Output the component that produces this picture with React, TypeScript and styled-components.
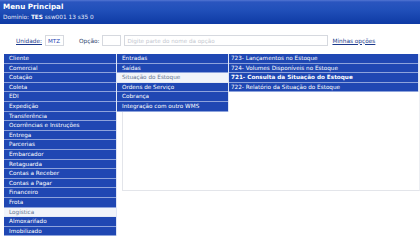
import React from "react";
import styled, { createGlobalStyle } from "styled-components";

const GlobalStyle = createGlobalStyle`
  html, body {
    margin: 0;
    background: #ffffff;
    font-family: "DejaVu Sans", Verdana, sans-serif;
  }
`;

const CELL_BLUE = "#1f47b3";
const CELL_LINE = "#8da3dc";
const ROW_H = 9.6;

const Header = styled.div`
  height: 24px;
  box-sizing: border-box;
  padding: 2px 3px 0;
  background: linear-gradient(180deg, #5375d2 0px, #2a55bf 2px, #2150ba 40%, #0e3aa4 100%);
  color: #ffffff;
`;

const Title = styled.div`
  font-size: 7.2px;
  font-weight: bold;
  line-height: 10px;
`;

const Domain = styled.div`
  font-size: 5.8px;
  line-height: 9px;
  margin-top: 1px;
  color: #e3e9f8;

  b {
    color: #ffffff;
  }
`;

const FilterBar = styled.div`
  display: flex;
  align-items: center;
  height: 11px;
  margin-top: 11px;
  padding-left: 16px;
  font-size: 5.8px;
`;

const LinkLabel = styled.span<{ $left?: number; $right?: number }>`
  color: #1c3a8c;
  text-decoration: underline;
  margin-left: ${(p) => p.$left ?? 0}px;
  margin-right: ${(p) => p.$right ?? 0}px;
  white-space: nowrap;
`;

const Label = styled.span`
  color: #2e3f6e;
  margin-left: 12px;
  margin-right: 3px;
  white-space: nowrap;
`;

const Field = styled.div<{ $w: number; $placeholder?: boolean }>`
  width: ${(p) => p.$w}px;
  height: 11px;
  box-sizing: border-box;
  border: 1px solid #d6d9df;
  margin-right: 3px;
  padding-left: 2px;
  display: flex;
  align-items: center;
  font-size: 5.6px;
  color: ${(p) => (p.$placeholder ? "#c4c8d0" : "#1f47b3")};
  white-space: nowrap;
  overflow: hidden;
`;

const Menu = styled.div`
  display: flex;
  align-items: flex-start;
  margin-top: 8px;
  padding-left: 4px;
`;

const Column = styled.div<{ $w: number }>`
  width: ${(p) => p.$w}px;
  flex: none;
  display: flex;
  flex-direction: column;
  border-right: 1px solid #dfe6f6;
  box-sizing: border-box;
`;

const Item = styled.div<{ $active?: boolean; $bold?: boolean; $pad?: number }>`
  height: ${ROW_H}px;
  box-sizing: border-box;
  border-bottom: 1px solid ${(p) => (p.$active ? "#e6ebf5" : CELL_LINE)};
  background: ${(p) => (p.$active ? "#f1f4fa" : CELL_BLUE)};
  color: ${(p) => (p.$active ? "#66748f" : "#ffffff")};
  font-size: 5.7px;
  font-weight: ${(p) => (p.$bold ? "bold" : "normal")};
  line-height: 8.6px;
  padding-left: ${(p) => p.$pad ?? 5}px;
  white-space: nowrap;
  overflow: hidden;
`;

const Panel = styled.div`
  flex: 1;
  height: 137px;
  margin-left: 5px;
  box-sizing: border-box;
  border-left: 1px solid #e3e5ea;
  border-bottom: 1px solid #e3e5ea;
  border-right: 1px solid #eceef2;
`;

const SubMenus = styled.div`
  display: flex;
  align-items: flex-start;
  margin-left: -6px;
`;

const mainItems = [
  "Cliente",
  "Comercial",
  "Cotação",
  "Coleta",
  "EDI",
  "Expedição",
  "Transferência",
  "Ocorrências e Instruções",
  "Entrega",
  "Parcerias",
  "Embarcador",
  "Retaguarda",
  "Contas a Receber",
  "Contas a Pagar",
  "Financeiro",
  "Frota",
  "Logística",
  "Almoxarifado",
  "Imobilizado",
];

const stockItems = [
  "Entradas",
  "Saídas",
  "Situação do Estoque",
  "Ordens de Serviço",
  "Cobrança",
  "Integração com outro WMS",
];

const optionItems = [
  "723- Lançamentos no Estoque",
  "724- Volumes Disponíveis no Estoque",
  "721- Consulta da Situação do Estoque",
  "722- Relatório da Situação do Estoque",
];

export default function App() {
  return (
    <>
      <GlobalStyle />
      <Header>
        <Title>Menu Principal</Title>
        <Domain>
          Dominio: <b>TES</b> ssw001 13 s35 0
        </Domain>
      </Header>

      <FilterBar>
        <LinkLabel $right={3}>Unidade:</LinkLabel>
        <Field $w={19}>MTZ</Field>
        <Label>Opção:</Label>
        <Field $w={19} />
        <Field $w={204} $placeholder>
          Digite parte do nome da opção
        </Field>
        <LinkLabel $left={1}>Minhas opções</LinkLabel>
      </FilterBar>

      <Menu>
        <Column $w={113}>
          {mainItems.map((name) => (
            <Item key={name} $active={name === "Logística"}>
              {name}
            </Item>
          ))}
        </Column>
        <Panel>
          <SubMenus>
            <Column $w={112}>
              {stockItems.map((name) => (
                <Item key={name} $active={name === "Situação do Estoque"}>
                  {name}
                </Item>
              ))}
            </Column>
            <Column $w={190}>
              {optionItems.map((name) => (
                <Item key={name} $pad={2} $bold={name.startsWith("721")}>
                  {name}
                </Item>
              ))}
            </Column>
          </SubMenus>
        </Panel>
      </Menu>
    </>
  );
}
